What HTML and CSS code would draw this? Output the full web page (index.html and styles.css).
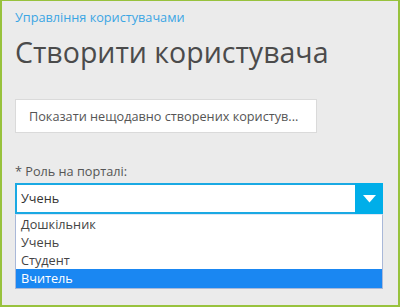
FILE: index.html
```html
<!DOCTYPE html>
<html lang="uk">
<head>
<meta charset="utf-8">
<link rel="stylesheet" href="styles.css">
</head>
<body>
<div class="frame">
  <a class="crumb" href="#">Управління користувачами</a>
  <h1 class="title">Створити користувача</h1>
  <button class="recent">Показати нещодавно створених користув...</button>
  <div class="field">
    <label class="label">* Роль на порталі:</label>
    <div class="select">
      <span class="value">Учень</span>
      <span class="arrow"><svg width="13" height="8" viewBox="0 0 13 8"><path d="M0 0h13L6.5 7.5z" fill="#fff"/></svg></span>
    </div>
    <ul class="options">
      <li>Дошкільник</li>
      <li>Учень</li>
      <li>Студент</li>
      <li class="active">Вчитель</li>
    </ul>
  </div>
</div>
</body>
</html>
```
FILE: styles.css
```css
html, body { margin: 0; padding: 0; }
body { font-family: "Open Sans", "Noto Sans", sans-serif; }
.frame {
  box-sizing: border-box;
  width: 400px;
  height: 307px;
  background: #ebebeb;
  border: 2px solid #98c23d;
  border-top-width: 1px;
  padding: 7px 15px 0 13px;
  display: flex;
  flex-direction: column;
  align-items: flex-start;
}
.crumb {
  font-size: 12.7px;
  line-height: 18px;
  color: #3ba6e4;
  text-decoration: none;
}
.title {
  margin: 8px 0 0;
  font-size: 28.5px;
  line-height: 36px;
  font-weight: 400;
  color: #4b4b4b;
}
.recent {
  margin-top: 29px;
  width: 302px;
  height: 34px;
  background: #fff;
  border: 1px solid #dadada;
  padding: 0 0 0 13px;
  text-align: left;
  font-family: inherit;
  font-size: 12.7px;
  color: #555;
}
.field {
  margin-top: 29px;
  width: 368px;
}
.label {
  display: block;
  font-size: 12.7px;
  line-height: 18px;
  color: #555;
}
.select {
  margin-top: 3px;
  height: 31px;
  box-sizing: border-box;
  border: 2px solid #1aa9e3;
  background: #fff;
  display: flex;
  align-items: stretch;
}
.value {
  flex: 1;
  font-size: 12.7px;
  line-height: 27px;
  padding-left: 4px;
  color: #333;
}
.arrow {
  width: 28px;
  margin: -2px -2px -2px 0;
  background: #00aee9;
  display: flex;
  align-items: center;
  justify-content: center;
}
.options {
  margin: 0;
  padding: 0;
  list-style: none;
  background: #fff;
  border: 1px solid #a9b8d8;
  border-top: 1px solid #dfe7f5;
}
.options li {
  height: 18px;
  line-height: 18px;
  font-size: 12.7px;
  color: #444;
  padding-left: 5px;
}
.options li.active {
  background: #1a87f2;
  color: #fff;
  height: 19px;
}
```
